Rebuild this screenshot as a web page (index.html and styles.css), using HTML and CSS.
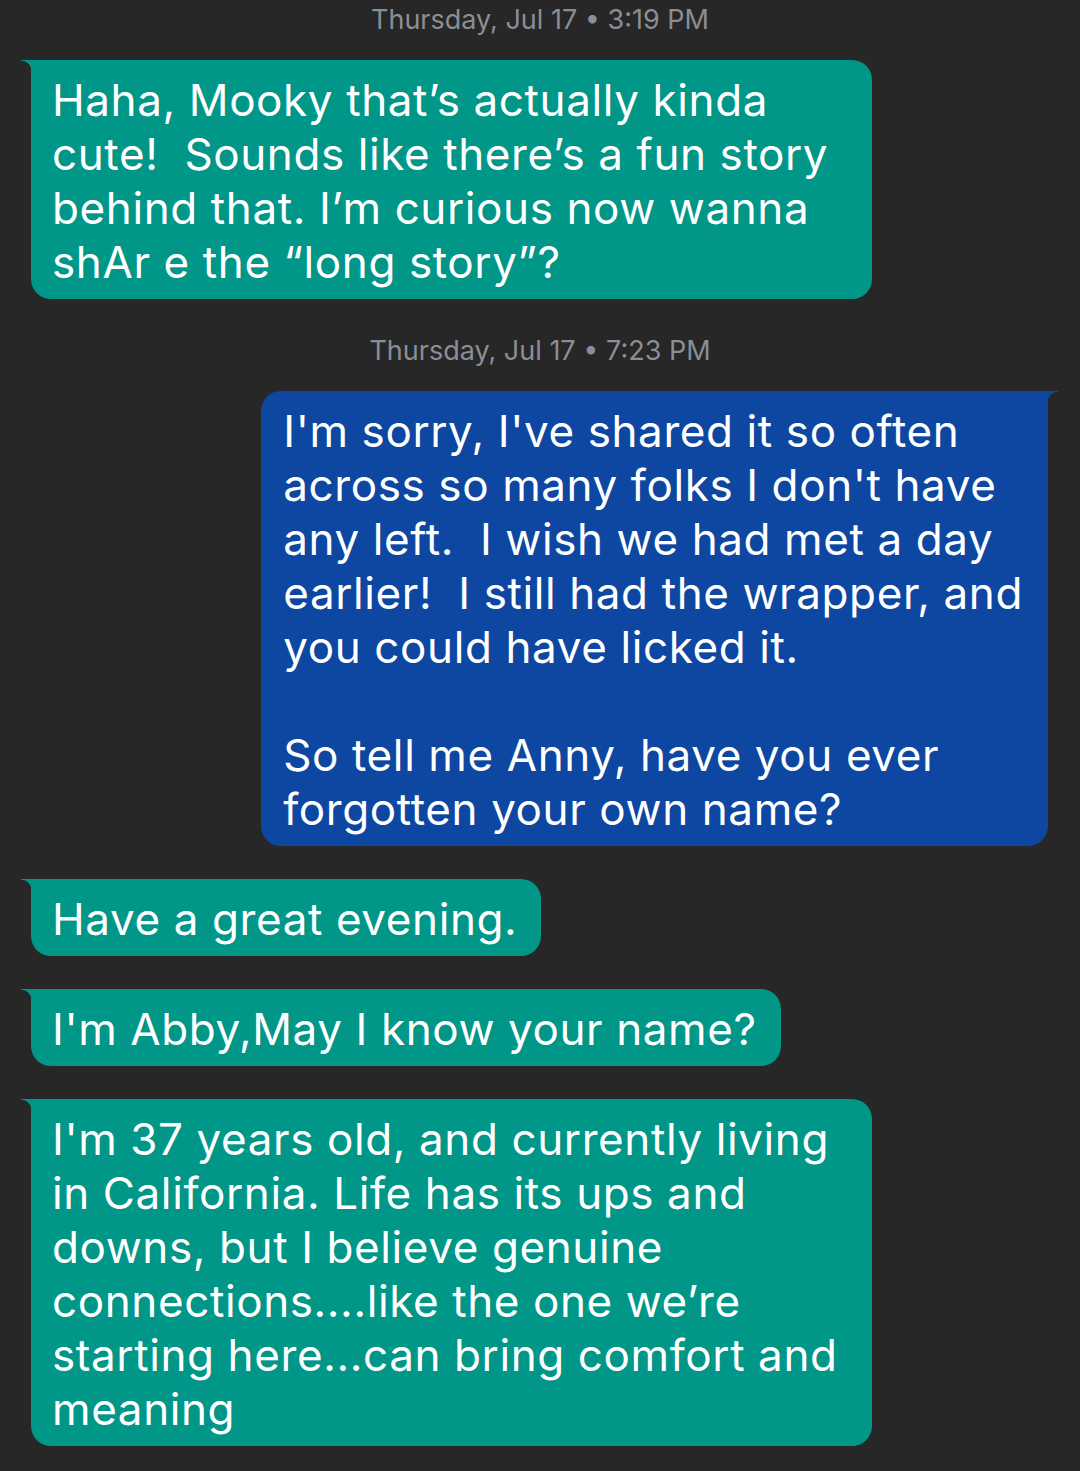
FILE: index.html
```html
<!DOCTYPE html>
<html>
<head>
<meta charset="utf-8">
<link rel="stylesheet" href="styles.css">
</head>
<body>
<div class="chat">
  <div class="stamp">Thursday, Jul 17 • 3:19 PM</div>
  <div class="bubble in wide">Haha, Mooky that’s actually kinda<br>cute!&nbsp; Sounds like there’s a fun story<br>behind that. I’m curious now wanna<br>shAr e the “long story”?</div>
  <div class="stamp">Thursday, Jul 17 • 7:23 PM</div>
  <div class="bubble out">I'm sorry, I've shared it so often<br>across so many folks I don't have<br>any left.&nbsp; I wish we had met a day<br>earlier!&nbsp; I still had the wrapper, and<br>you could have licked it.<br><br>So tell me Anny, have you ever<br>forgotten your own name?</div>
  <div class="bubble in">Have a great evening.</div>
  <div class="bubble in">I'm Abby,May I know your name?</div>
  <div class="bubble in wide">I'm 37 years old, and currently living<br>in California. Life has its ups and<br>downs, but I believe genuine<br>connections....like the one we’re<br>starting here...can bring comfort and<br>meaning</div>
</div>
</body>
</html>
```
FILE: styles.css
```css
html, body {
  margin: 0;
  padding: 0;
  background: #272727;
}
.chat {
  display: flex;
  flex-direction: column;
  width: 1080px;
  height: 1471px;
  overflow: hidden;
  font-family: "Inter", "Liberation Sans", sans-serif;
}
.stamp {
  align-self: center;
  height: 40px;
  line-height: 40px;
  font-size: 27px;
  color: #8a8e95;
  margin-top: 32px;
  margin-bottom: 20px;
}
.stamp:first-child {
  margin-top: 0;
}
.bubble {
  position: relative;
  width: fit-content;
  box-sizing: border-box;
  white-space: nowrap;
  font-size: 44px;
  line-height: 54px;
  letter-spacing: 0.6px;
  color: #ffffff;
  padding: 13px 24px 10px 21px;
  border-radius: 0 20px 20px 20px;
}
.bubble + .bubble {
  margin-top: 33px;
}
.in {
  align-self: flex-start;
  margin-left: 31px;
  background: #009688;
}
.in.wide {
  min-width: 841px;
}
.in::before {
  content: "";
  position: absolute;
  left: -10px;
  top: 0;
  width: 10px;
  height: 11px;
  background: radial-gradient(circle at 0 100%, transparent 10px, #009688 10.6px);
}
.out {
  align-self: flex-end;
  margin-right: 32px;
  background: #0d47a1;
  border-radius: 20px 0 20px 20px;
  padding-left: 22px;
  padding-right: 25px;
}
.out::before {
  content: "";
  position: absolute;
  right: -10px;
  top: 0;
  width: 10px;
  height: 11px;
  background: radial-gradient(circle at 100% 100%, transparent 10px, #0d47a1 10.6px);
}
```
